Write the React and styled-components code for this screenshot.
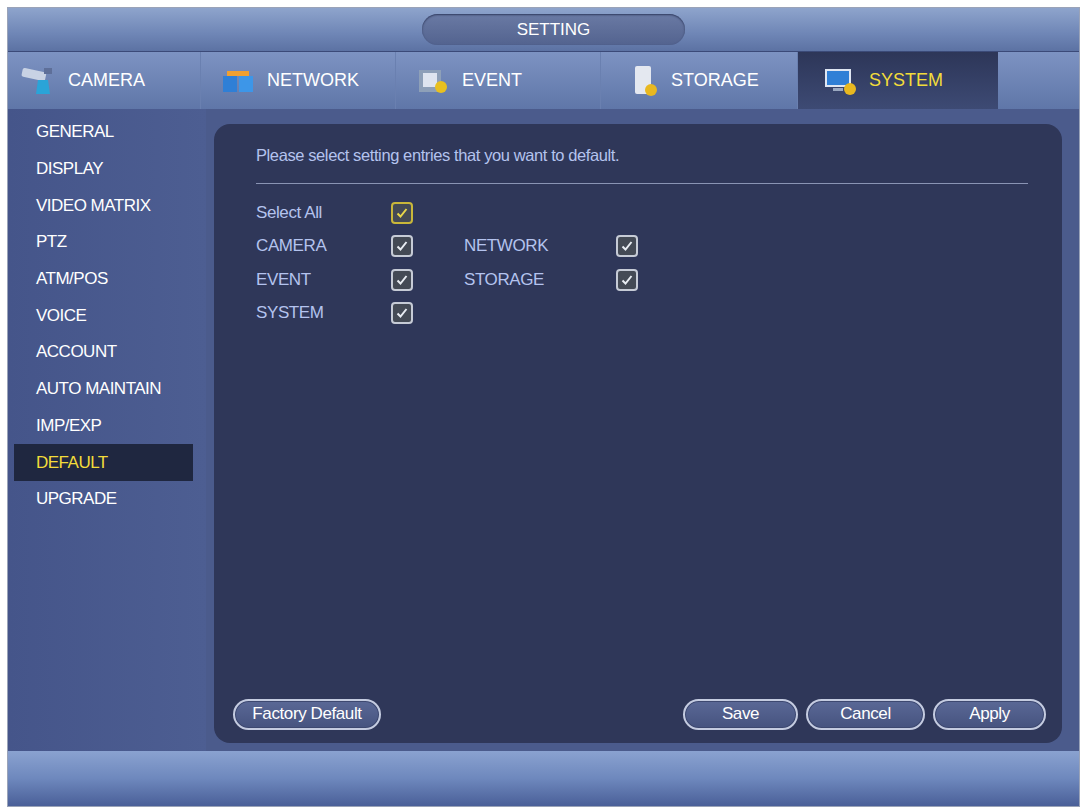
import React from 'react';
import styled, { createGlobalStyle } from 'styled-components';

const Global = createGlobalStyle`
  body { margin: 0; background: #fff; font-family: "Liberation Sans", Arial, sans-serif; }
`;

const Frame = styled.div`
  margin: 7px 6px 7px 7px;
  width: 1071px;
  height: 798px;
  display: flex;
  flex-direction: column;
  border: 1px solid #9aa3b8;
  background: #4a5a88;
`;

const TitleBar = styled.div`
  height: 43px;
  display: flex;
  justify-content: center;
  align-items: center;
  background: linear-gradient(#8ea4cc, #6f86b6 60%, #5c72a3);
  border-bottom: 1px solid #3b4a78;
`;

const TitlePill = styled.div`
  width: 263px;
  height: 31px;
  margin-left: 20px;
  border-radius: 16px;
  background: linear-gradient(#6a7aa4, #53638f);
  box-shadow: inset 0 1px 2px #2f3a5e;
  color: #fff;
  font-size: 17px;
  display: flex;
  align-items: center;
  justify-content: center;
`;

const Tabs = styled.div`
  height: 57px;
  display: flex;
  background: linear-gradient(#7d93c2, #5f76a8);
`;

const Tab = styled.div`
  width: ${p => p.w}px;
  display: flex;
  align-items: center;
  gap: 10px;
  padding-left: ${p => p.pl}px;
  box-sizing: border-box;
  font-size: 18px;
  color: ${p => (p.active ? '#f2dc3a' : '#fff')};
  background: ${p => (p.active ? 'linear-gradient(#2d3658, #3d4a74)' : 'transparent')};
  border-right: ${p => (p.active ? 'none' : '1px solid #6a80b0')};
`;

const Body = styled.div`
  flex: 1;
  display: flex;
  background: #4b5b8c;
`;

const Sidebar = styled.div`
  width: 198px;
  padding: 5px 0 0 6px;
  box-sizing: border-box;
  background: linear-gradient(90deg, #45558a, #4d5e92);
  display: flex;
  flex-direction: column;
`;

const SideItem = styled.div`
  width: 179px;
  height: 36.7px;
  display: flex;
  align-items: center;
  padding-left: 22px;
  box-sizing: border-box;
  font-size: 17px;
  letter-spacing: -0.5px;
  color: ${p => (p.active ? '#f2dc3a' : '#fff')};
  background: ${p => (p.active ? '#1f2740' : 'transparent')};
`;

const Main = styled.div`
  flex: 1;
  display: flex;
  padding: 15px 0 8px 8px;
`;

const Panel = styled.div`
  flex: 1;
  background: #2f3759;
  border-radius: 16px;
  padding: 22px 16px 12px 19px;
  display: flex;
  flex-direction: column;
  margin-right: 17px;
`;

const Hint = styled.div`
  color: #b4c3ee;
  font-size: 16.5px;
  letter-spacing: -0.4px;
  padding-left: 23px;
  height: 20px;
`;

const Rule = styled.div`
  height: 1px;
  background: #8a94b4;
  margin: 17px 18px 12px 23px;
`;

const Grid = styled.div`
  display: grid;
  grid-template-columns: 135px 73px 152px 30px;
  grid-auto-rows: 33.5px;
  align-items: center;
  padding-left: 23px;
`;

const Label = styled.div`
  color: #b4c3ee;
  font-size: 17px;
  letter-spacing: -0.4px;
`;

const Box = styled.div`
  width: 18px;
  height: 18px;
  border: 2px solid ${p => (p.gold ? '#c9b73a' : '#c6cbd6')};
  border-radius: 4px;
  background: #444a55;
  display: flex;
  align-items: center;
  justify-content: center;
`;

const Spacer = styled.div`flex: 1;`;

const Buttons = styled.div`
  display: flex;
  align-items: center;
  height: 34px;
  gap: 8px;
`;

const Btn = styled.button`
  width: ${p => p.w}px;
  height: 31px;
  border-radius: 16px;
  border: 2px solid #c4cbe0;
  box-shadow: inset 0 0 0 1px #3d4870;
  background: linear-gradient(#5a6896, #46537f);
  color: #fff;
  font-family: "Liberation Sans", Arial, sans-serif;
  font-size: 17px;
  letter-spacing: -0.4px;
  padding: 0;
`;

const Footer = styled.div`
  height: 55px;
  background: linear-gradient(#8aa2d0, #6e88bd 50%, #4a5f98);
`;

const Check = ({ gold }) => (
  <Box gold={gold}>
    <svg width="14" height="14" viewBox="0 0 14 14">
      <path d="M2.5 7.5 L5.5 10.5 L11.5 3" fill="none" stroke={gold ? '#e9d84a' : '#e8ecf2'} strokeWidth="2" />
    </svg>
  </Box>
);

const Icon = ({ kind }) => {
  if (kind === 'camera')
    return (
      <svg width="38" height="30" viewBox="0 0 38 30">
        <rect x="2" y="4" width="24" height="9" rx="2" fill="#c8d2e4" transform="rotate(12 14 8)" />
        <rect x="24" y="2" width="8" height="6" fill="#5e6f99" />
        <path d="M18 14 L28 14 L30 28 L16 28 Z" fill="#2aa4d8" />
      </svg>
    );
  if (kind === 'network')
    return (
      <svg width="36" height="26" viewBox="0 0 36 26">
        <rect x="2" y="8" width="14" height="16" fill="#2f7fd6" />
        <rect x="18" y="8" width="14" height="16" fill="#3d96e8" />
        <rect x="6" y="3" width="22" height="5" fill="#f0a030" />
      </svg>
    );
  if (kind === 'event')
    return (
      <svg width="36" height="28" viewBox="0 0 36 28">
        <rect x="3" y="3" width="22" height="22" fill="#8ea0b8" />
        <rect x="7" y="6" width="14" height="14" fill="#dfe5ef" />
        <circle cx="25" cy="20" r="6" fill="#e8c020" />
      </svg>
    );
  if (kind === 'storage')
    return (
      <svg width="30" height="34" viewBox="0 0 30 34">
        <rect x="4" y="2" width="16" height="28" rx="2" fill="#e4e8f0" />
        <circle cx="20" cy="26" r="6" fill="#e8b820" />
      </svg>
    );
  return (
    <svg width="36" height="30" viewBox="0 0 36 30">
      <rect x="2" y="3" width="26" height="18" fill="#dfe6f2" />
      <rect x="4" y="5" width="22" height="14" fill="#2f7fd6" />
      <rect x="10" y="22" width="10" height="3" fill="#9aa8c0" />
      <circle cx="27" cy="23" r="6" fill="#e8b820" />
    </svg>
  );
};

const tabs = [
  ['camera', 'CAMERA', 193, 12],
  ['network', 'NETWORK', 195, 20],
  ['event', 'EVENT', 205, 20],
  ['storage', 'STORAGE', 197, 30],
  ['system', 'SYSTEM', 200, 25, true],
];

const side = ['GENERAL', 'DISPLAY', 'VIDEO MATRIX', 'PTZ', 'ATM/POS', 'VOICE', 'ACCOUNT', 'AUTO MAINTAIN', 'IMP/EXP', 'DEFAULT', 'UPGRADE'];

export default function App() {
  return (
    <>
      <Global />
      <Frame>
        <TitleBar>
          <TitlePill>SETTING</TitlePill>
        </TitleBar>
        <Tabs>
          {tabs.map(([k, t, w, pl, a]) => (
            <Tab key={k} w={w} pl={pl} active={a}>
              <Icon kind={k} />
              {t}
            </Tab>
          ))}
        </Tabs>
        <Body>
          <Sidebar>
            {side.map(s => (
              <SideItem key={s} active={s === 'DEFAULT'}>{s}</SideItem>
            ))}
          </Sidebar>
          <Main>
            <Panel>
              <Hint>Please select setting entries that you want to default.</Hint>
              <Rule />
              <Grid>
                <Label>Select All</Label><Check gold /><span /><span />
                <Label>CAMERA</Label><Check /><Label>NETWORK</Label><Check />
                <Label>EVENT</Label><Check /><Label>STORAGE</Label><Check />
                <Label>SYSTEM</Label><Check /><span /><span />
              </Grid>
              <Spacer />
              <Buttons>
                <Btn w={148}>Factory Default</Btn>
                <Spacer />
                <Btn w={115}>Save</Btn>
                <Btn w={119}>Cancel</Btn>
                <Btn w={113}>Apply</Btn>
              </Buttons>
            </Panel>
          </Main>
        </Body>
        <Footer />
      </Frame>
    </>
  );
}
